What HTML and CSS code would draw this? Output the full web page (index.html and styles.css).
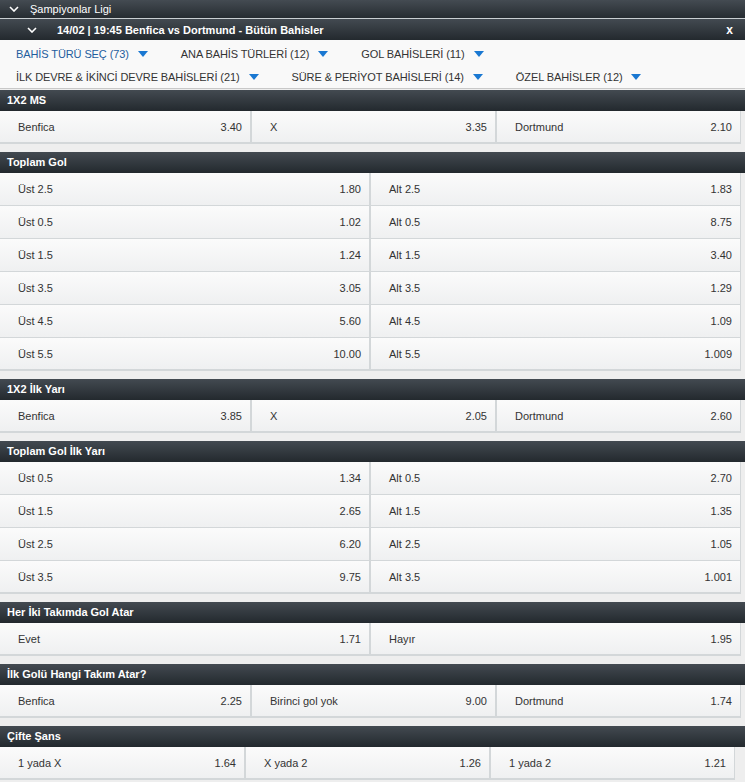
FILE: index.html
```html
<!DOCTYPE html>
<html lang="tr">
    <head>
        <meta charset="UTF-8"><meta name="viewport" content="width=device-width, initial-scale=1.0"><title>Bütün Bahisler</title>
        <link rel="stylesheet" href="styles.css">
    </head>
    <body>
        <div class="league-bar">
            <svg class="chev" width="10" height="6" viewBox="0 0 10 6"><path d="M1 1 L5 5 L9 1" fill="none" stroke="#fff" stroke-width="1.6"/></svg>
            <span>Şampiyonlar Ligi</span>
        </div>
        <div class="event-bar">
            <svg class="chev" width="10" height="6" viewBox="0 0 10 6"><path d="M1 1 L5 5 L9 1" fill="none" stroke="#fff" stroke-width="1.6"/></svg>
            <span class="event-title">14/02 | 19:45 Benfica vs Dortmund - Bütün Bahisler</span>
            <span class="close">x</span>
        </div>
        <div class="filters">
            <div class="filter-row">
                <span class="filter active">BAHİS TÜRÜ SEÇ (73)<i class="caret"></i></span>
                <span class="filter">ANA BAHİS TÜRLERİ (12)<i class="caret"></i></span>
                <span class="filter">GOL BAHİSLERİ (11)<i class="caret"></i></span>
            </div>
            <div class="filter-row">
                <span class="filter">İLK DEVRE &amp; İKİNCİ DEVRE BAHİSLERİ (21)<i class="caret"></i></span>
                <span class="filter">SÜRE &amp; PERİYOT BAHİSLERİ (14)<i class="caret"></i></span>
                <span class="filter">ÖZEL BAHİSLER (12)<i class="caret"></i></span>
            </div>
        </div>

        <div class="market">
            <div class="market-head">1X2 MS</div>
            <div class="odds three">
                <div class="cell"><span>Benfica</span><span>3.40</span></div>
                <div class="cell"><span>X</span><span>3.35</span></div>
                <div class="cell"><span>Dortmund</span><span>2.10</span></div>
            </div>
        </div>

        <div class="market">
            <div class="market-head">Toplam Gol</div>
            <div class="odds two">
                <div class="cell"><span>Üst 2.5</span><span>1.80</span></div>
                <div class="cell"><span>Alt 2.5</span><span>1.83</span></div>
                <div class="cell"><span>Üst 0.5</span><span>1.02</span></div>
                <div class="cell"><span>Alt 0.5</span><span>8.75</span></div>
                <div class="cell"><span>Üst 1.5</span><span>1.24</span></div>
                <div class="cell"><span>Alt 1.5</span><span>3.40</span></div>
                <div class="cell"><span>Üst 3.5</span><span>3.05</span></div>
                <div class="cell"><span>Alt 3.5</span><span>1.29</span></div>
                <div class="cell"><span>Üst 4.5</span><span>5.60</span></div>
                <div class="cell"><span>Alt 4.5</span><span>1.09</span></div>
                <div class="cell"><span>Üst 5.5</span><span>10.00</span></div>
                <div class="cell"><span>Alt 5.5</span><span>1.009</span></div>
            </div>
        </div>

        <div class="market">
            <div class="market-head">1X2 İlk Yarı</div>
            <div class="odds three">
                <div class="cell"><span>Benfica</span><span>3.85</span></div>
                <div class="cell"><span>X</span><span>2.05</span></div>
                <div class="cell"><span>Dortmund</span><span>2.60</span></div>
            </div>
        </div>

        <div class="market">
            <div class="market-head">Toplam Gol İlk Yarı</div>
            <div class="odds two">
                <div class="cell"><span>Üst 0.5</span><span>1.34</span></div>
                <div class="cell"><span>Alt 0.5</span><span>2.70</span></div>
                <div class="cell"><span>Üst 1.5</span><span>2.65</span></div>
                <div class="cell"><span>Alt 1.5</span><span>1.35</span></div>
                <div class="cell"><span>Üst 2.5</span><span>6.20</span></div>
                <div class="cell"><span>Alt 2.5</span><span>1.05</span></div>
                <div class="cell"><span>Üst 3.5</span><span>9.75</span></div>
                <div class="cell"><span>Alt 3.5</span><span>1.001</span></div>
            </div>
        </div>

        <div class="market">
            <div class="market-head">Her İki Takımda Gol Atar</div>
            <div class="odds two">
                <div class="cell"><span>Evet</span><span>1.71</span></div>
                <div class="cell"><span>Hayır</span><span>1.95</span></div>
            </div>
        </div>

        <div class="market">
            <div class="market-head">İlk Golü Hangi Takım Atar?</div>
            <div class="odds three">
                <div class="cell"><span>Benfica</span><span>2.25</span></div>
                <div class="cell"><span>Birinci gol yok</span><span>9.00</span></div>
                <div class="cell"><span>Dortmund</span><span>1.74</span></div>
            </div>
        </div>

        <div class="market">
            <div class="market-head">Çifte Şans</div>
            <div class="odds three narrow">
                <div class="cell"><span>1 yada X</span><span>1.64</span></div>
                <div class="cell"><span>X yada 2</span><span>1.26</span></div>
                <div class="cell"><span>1 yada 2</span><span>1.21</span></div>
            </div>
        </div>
    </body>
</html>
```

FILE: styles.css
```css
body {
    margin: 0;
    background-color: #eeeeee;
    font-family: "Liberation Sans", Arial, sans-serif;
    font-size: 11px;
    color: #333;
}
.league-bar {
    display: flex;
    align-items: center;
    height: 18px;
    background: linear-gradient(#444b52, #262c31);
    color: #fff;
    border-bottom: 1px solid #c9ced1;
}
.league-bar .chev {
    margin: 0 11px 0 9px;
}
.event-bar {
    display: flex;
    align-items: center;
    height: 21px;
    background: linear-gradient(#434a51, #23292e);
    color: #fff;
    font-weight: bold;
}
.event-bar .chev {
    margin: 0 20px 0 27px;
}
.event-title {
    flex: 1;
}
.close {
    margin-right: 12px;
    font-size: 12px;
}
.filters {
    background-color: #f9f9f9;
    padding: 2px 0 0 16px;
    border-bottom: 1px solid #c8c8c8;
    margin-bottom: 1px;
}
.filter-row {
    display: flex;
    align-items: center;
    gap: 33px;
    height: 23px;
}
.filter {
    display: flex;
    align-items: center;
    color: #333;
    letter-spacing: -0.1px;
}
.filter.active {
    color: #1f5d9e;
}
.caret {
    display: inline-block;
    width: 0;
    height: 0;
    margin-left: 9px;
    border-left: 5px solid transparent;
    border-right: 5px solid transparent;
    border-top: 6px solid #1a78d2;
}
.market {
    margin-bottom: 8px;
}
.market-head {
    height: 21px;
    line-height: 21px;
    padding-left: 7px;
    background: linear-gradient(#434a51, #23292e);
    color: #fff;
    font-weight: bold;
}
.odds {
    display: grid;
    width: 741px;
}
.odds.three {
    grid-template-columns: 252px 245px 1fr;
}
.odds.two {
    grid-template-columns: 371px 1fr;
}
.odds.narrow {
    width: 735px;
    grid-template-columns: 246px 245px 1fr;
}
.cell {
    display: flex;
    justify-content: space-between;
    align-items: center;
    height: 32px;
    padding: 0 8px 0 18px;
    background: linear-gradient(#fbfbfb, #eff0f1);
    border-right: 2px solid #d3d7d9;
    border-bottom: 1px solid #d3d7d9;
}
.odds.three .cell:last-child,
.odds.two .cell:nth-child(2n) {
    border-right-width: 1px;
}
.odds .cell:nth-last-child(-n+3) {
    height: 31px;
    border-bottom-width: 2px;
}
.odds.two .cell {
    height: 32px;
    border-bottom-width: 1px;
}
.odds.two .cell:nth-last-child(-n+2) {
    height: 31px;
    border-bottom-width: 2px;
}
```
